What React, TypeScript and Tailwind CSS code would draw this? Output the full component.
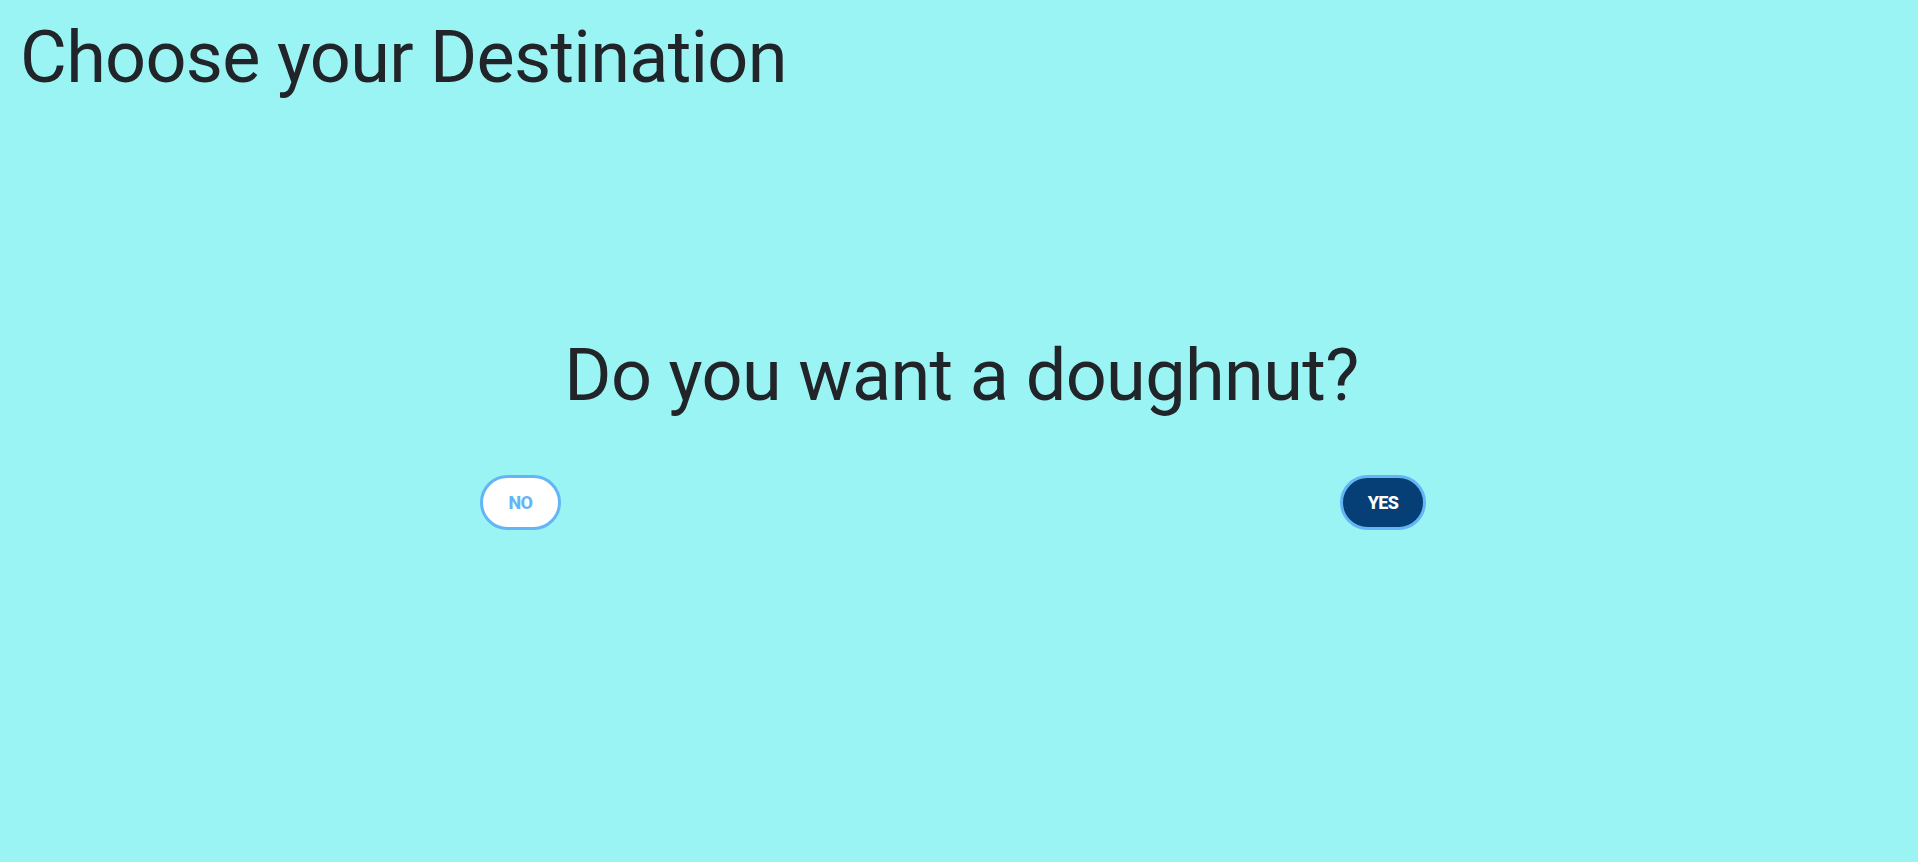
import React from 'react';

export default function App() {
  const answer = (value: string) => {
    console.log('answer', value);
  };

  return (
    <div className="min-h-[862px] w-full bg-[#9bf4f4] text-[#212529] font-['Roboto',sans-serif]">
      <h1 className="pl-[20px] pt-[15px] text-[72px] leading-[1.2] tracking-[-0.7px] font-normal">Choose your Destination</h1>

      <div className="mt-[232px] flex flex-col">
        <h2 className="pl-[5px] text-center text-[72px] leading-[1.2] tracking-[-0.6px] font-normal">Do you want a doughnut?</h2>

        <div className="ml-[480px] mt-[55px] flex w-[946px] justify-between">
          <button
            onClick={() => answer('no')}
            className="h-[55px] w-[81px] rounded-full border-[3px] border-[#64b5f6] bg-white text-[18px] font-extrabold tracking-[-0.6px] text-[#64b5f6]"
          >
            NO
          </button>
          <button
            onClick={() => answer('yes')}
            className="h-[55px] w-[86px] rounded-full border-[3px] border-[#64b5f6] bg-[#063f75] text-[18px] font-extrabold tracking-[-0.6px] text-white"
          >
            YES
          </button>
        </div>
      </div>
    </div>
  );
}
